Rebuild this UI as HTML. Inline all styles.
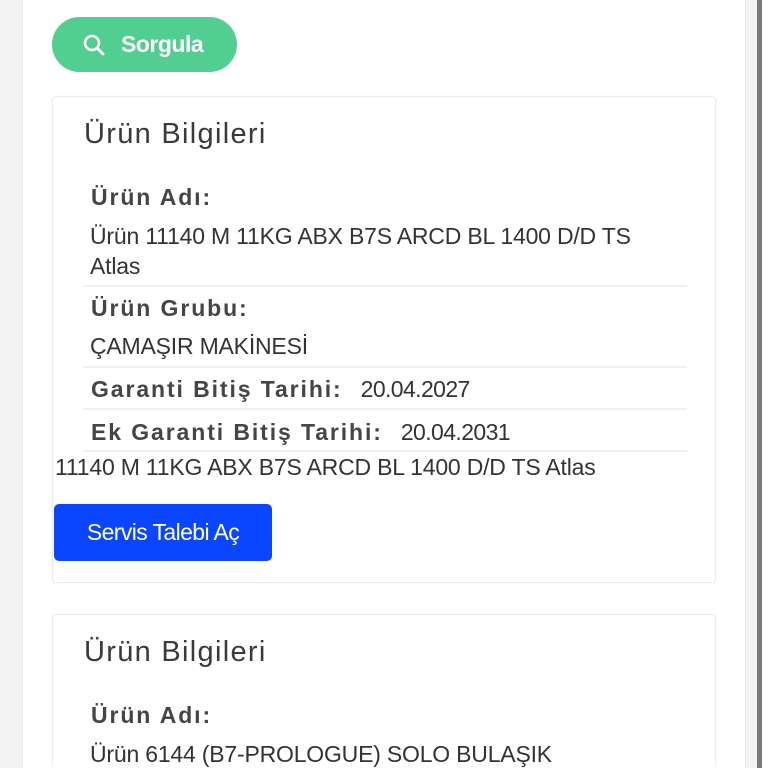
<!DOCTYPE html>
<html style="width:768px;height:768px;overflow:hidden"><head><meta charset="utf-8"><style>
*{margin:0;padding:0;box-sizing:border-box}
body{width:768px;height:768px;overflow:hidden;background:#f3f3f3;position:relative;font-family:"Liberation Sans",sans-serif;color:#333}
.col{position:absolute;left:22px;top:0;width:724px;height:768px;background:#fff;border-left:1px solid #ececec;border-right:1px solid #e6e6e6}
.bar{position:absolute;left:757px;top:0;width:5px;height:768px;background:#7a7a7a}
.bar2{position:absolute;left:762px;top:0;width:6px;height:768px;background:#fff}
.btn{position:absolute;left:52px;top:17px;width:185px;height:55px;border-radius:28px;background:#52cf90;color:#fff;font-weight:bold;font-size:23px;line-height:55px;padding-left:69px;letter-spacing:-0.5px}
.btn svg{position:absolute;left:30px;top:16px}
.card{position:absolute;left:52px;width:664px;background:#fff;border:1px solid #ececec;border-radius:4px;box-shadow:0 0 3px rgba(0,0,0,.04)}
.t{position:absolute;left:31px;font-size:29px;color:#3a3a3a;letter-spacing:1.3px}
.l{position:absolute;left:38px;font-size:23px;font-weight:bold;color:#454545;letter-spacing:1.9px}
.v{font-weight:normal;letter-spacing:-0.6px;font-size:23px;color:#333;margin-left:18px}
.d{position:absolute;left:37px;font-size:23px;color:#333;letter-spacing:-0.2px;line-height:30px}
.hr{position:absolute;left:30px;width:604px;height:2px;background:#f0f0f0}
.sb{position:absolute;left:1px;top:407px;width:218px;height:57px;background:#0a45ff;border-radius:5px;color:#fff;font-size:23px;line-height:57px;text-align:center;letter-spacing:-0.6px}
</style></head><body>
<div class="col"></div><div class="bar"></div><div class="bar2"></div>
<div class="btn"><svg width="24" height="24" viewBox="0 0 24 24"><circle cx="10" cy="10" r="7" fill="none" stroke="#fff" stroke-width="2.6"/><path d="M15 15l6 6" stroke="#fff" stroke-width="2.8" stroke-linecap="round"/></svg>Sorgula</div>
<div class="card" style="top:96px;height:487px">
<div class="t" style="top:21px">Ürün Bilgileri</div>
<div class="l" style="top:87px">Ürün Adı:</div>
<div class="d" style="top:124px">Ürün 11140 M 11KG ABX B7S ARCD BL 1400 D/D TS<br>Atlas</div>
<div class="hr" style="top:188px"></div>
<div class="l" style="top:198px">Ürün Grubu:</div>
<div class="d" style="top:234px">ÇAMAŞIR MAKİNESİ</div>
<div class="hr" style="top:269px"></div>
<div class="l" style="top:279px">Garanti Bitiş Tarihi:<span class="v">20.04.2027</span></div>
<div class="hr" style="top:311px"></div>
<div class="l" style="top:322px">Ek Garanti Bitiş Tarihi:<span class="v">20.04.2031</span></div>
<div class="hr" style="top:353px"></div>
<div class="d" style="left:2px;top:355px">11140 M 11KG ABX B7S ARCD BL 1400 D/D TS Atlas</div>
<div class="sb">Servis Talebi Aç</div>
</div>
<div class="card" style="top:614px;height:154px;border-bottom:none">
<div class="t" style="top:21px">Ürün Bilgileri</div>
<div class="l" style="top:87px">Ürün Adı:</div>
<div class="d" style="top:124px">Ürün 6144 (B7-PROLOGUE) SOLO BULAŞIK</div>
</div>
</body></html>
